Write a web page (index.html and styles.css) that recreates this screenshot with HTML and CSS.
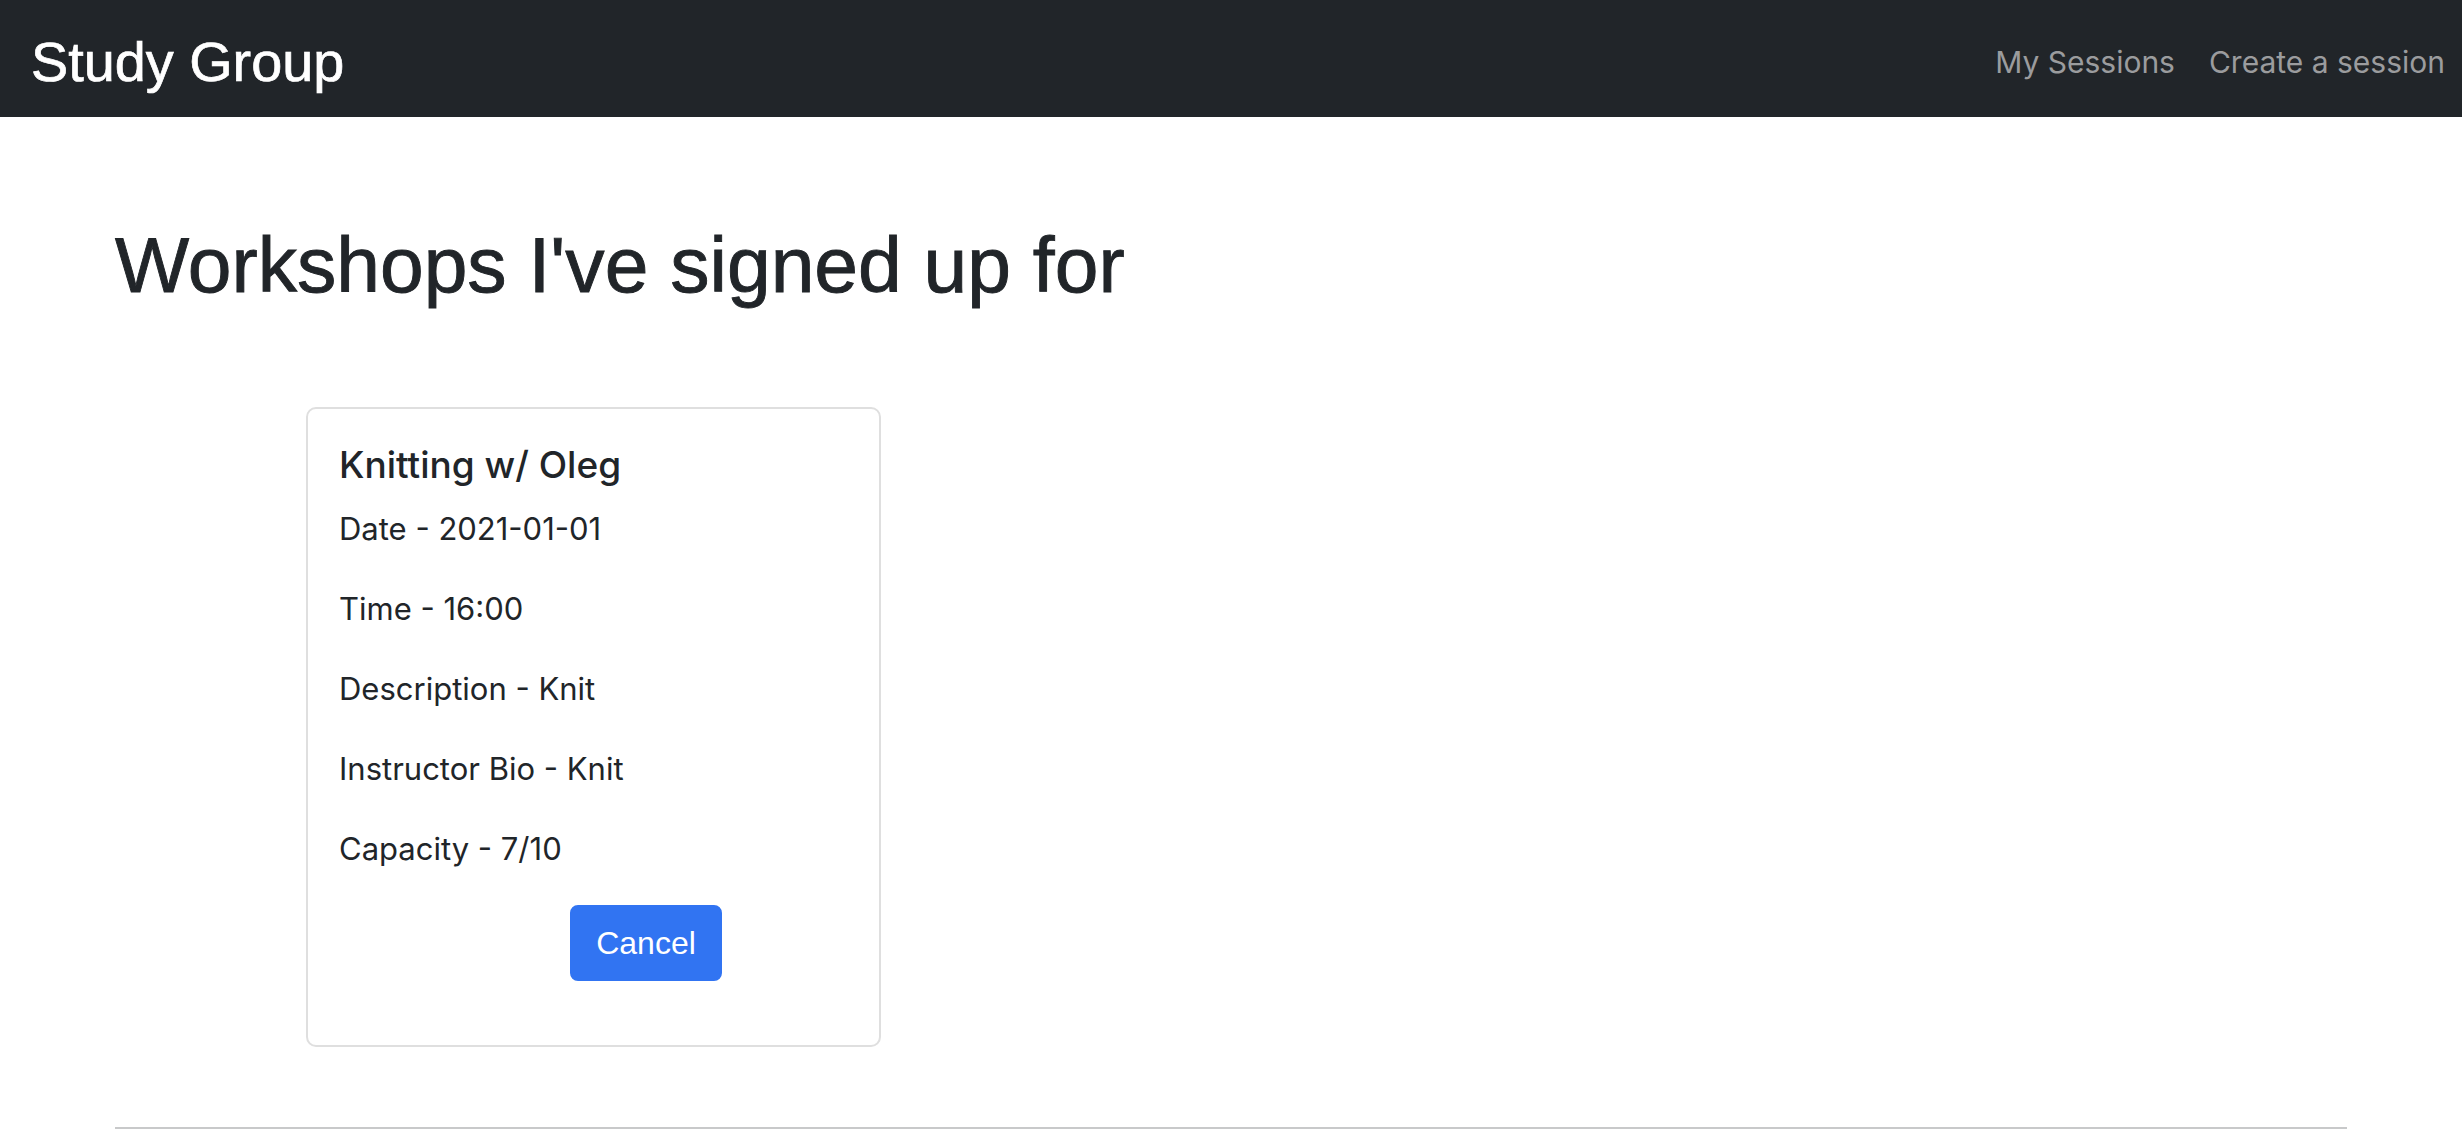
FILE: index.html
```html
<!DOCTYPE html>
<html lang="en">
<head>
<meta charset="utf-8">
<title>Study Group</title>
<link rel="stylesheet" href="styles.css">
</head>
<body>
<nav class="navbar">
  <a class="brand" href="#">Study Group</a>
  <div class="nav-links">
    <a class="nav-link" href="#">My Sessions</a>
    <a class="nav-link" href="#">Create a session</a>
  </div>
</nav>
<main class="container">
  <h1 class="page-title">Workshops I've signed up for</h1>
  <div class="card">
    <h5 class="card-title">Knitting w/ Oleg</h5>
    <p class="card-text">Date - 2021-01-01</p>
    <p class="card-text">Time - 16:00</p>
    <p class="card-text">Description - Knit</p>
    <p class="card-text">Instructor Bio - Knit</p>
    <p class="card-text">Capacity - 7/10</p>
    <div class="card-actions">
      <button class="btn-primary" type="button">Cancel</button>
    </div>
  </div>
  <hr class="divider">
</main>
</body>
</html>
```
FILE: styles.css
```css
* { box-sizing: border-box; }
html, body { margin: 0; padding: 0; background: #fff; }
body {
  font-family: "Inter", "Noto Sans", sans-serif;
  color: #212529;
}
.navbar {
  height: 117px;
  background: #212529;
  display: flex;
  align-items: center;
  justify-content: space-between;
  padding: 6px 17px 0 31px;
}
.brand {
  font-family: "Liberation Sans", Arial, sans-serif;
  font-size: 55.8px;
  color: #fff;
  text-decoration: none;
  line-height: 1;
  -webkit-text-stroke: 0.7px #fff;
}
.nav-links {
  display: flex;
  gap: 34px;
}
.nav-link {
  font-family: "Inter", sans-serif;
  font-size: 30px;
  color: #9b9c9e;
  text-decoration: none;
}
.container {
  width: 2232px;
  margin: 0 auto;
}
.page-title {
  font-family: "Liberation Sans", Arial, sans-serif;
  font-weight: 400;
  font-size: 78.6px;
  line-height: 1.2;
  margin: 101px 0 95px;
  color: #212529;
  -webkit-text-stroke: 0.9px #212529;
}
.card {
  width: 575px;
  margin-left: 191px;
  border: 2px solid #dfdfdf;
  border-radius: 10px;
  padding: 31px;
  margin-bottom: 80px;
}
.card-title {
  font-size: 37px;
  font-weight: 500;
  line-height: 1.2;
  margin: 3px 0 17px;
}
.card-text {
  font-size: 31px;
  line-height: 48px;
  margin: 0 0 32px;
}
.card-actions {
  text-align: center;
  padding-left: 105px;
  margin-bottom: 33px;
}
.btn-primary {
  font-family: "Liberation Sans", Arial, sans-serif;
  font-size: 32px;
  line-height: 48px;
  padding: 12px 24px;
  color: #fff;
  background: #3174f2;
  border: 2px solid #3174f2;
  border-radius: 8px;
}
.divider {
  margin: 32px 0;
  border: 0;
  border-top: 2px solid #c8c9ca;
}
```
